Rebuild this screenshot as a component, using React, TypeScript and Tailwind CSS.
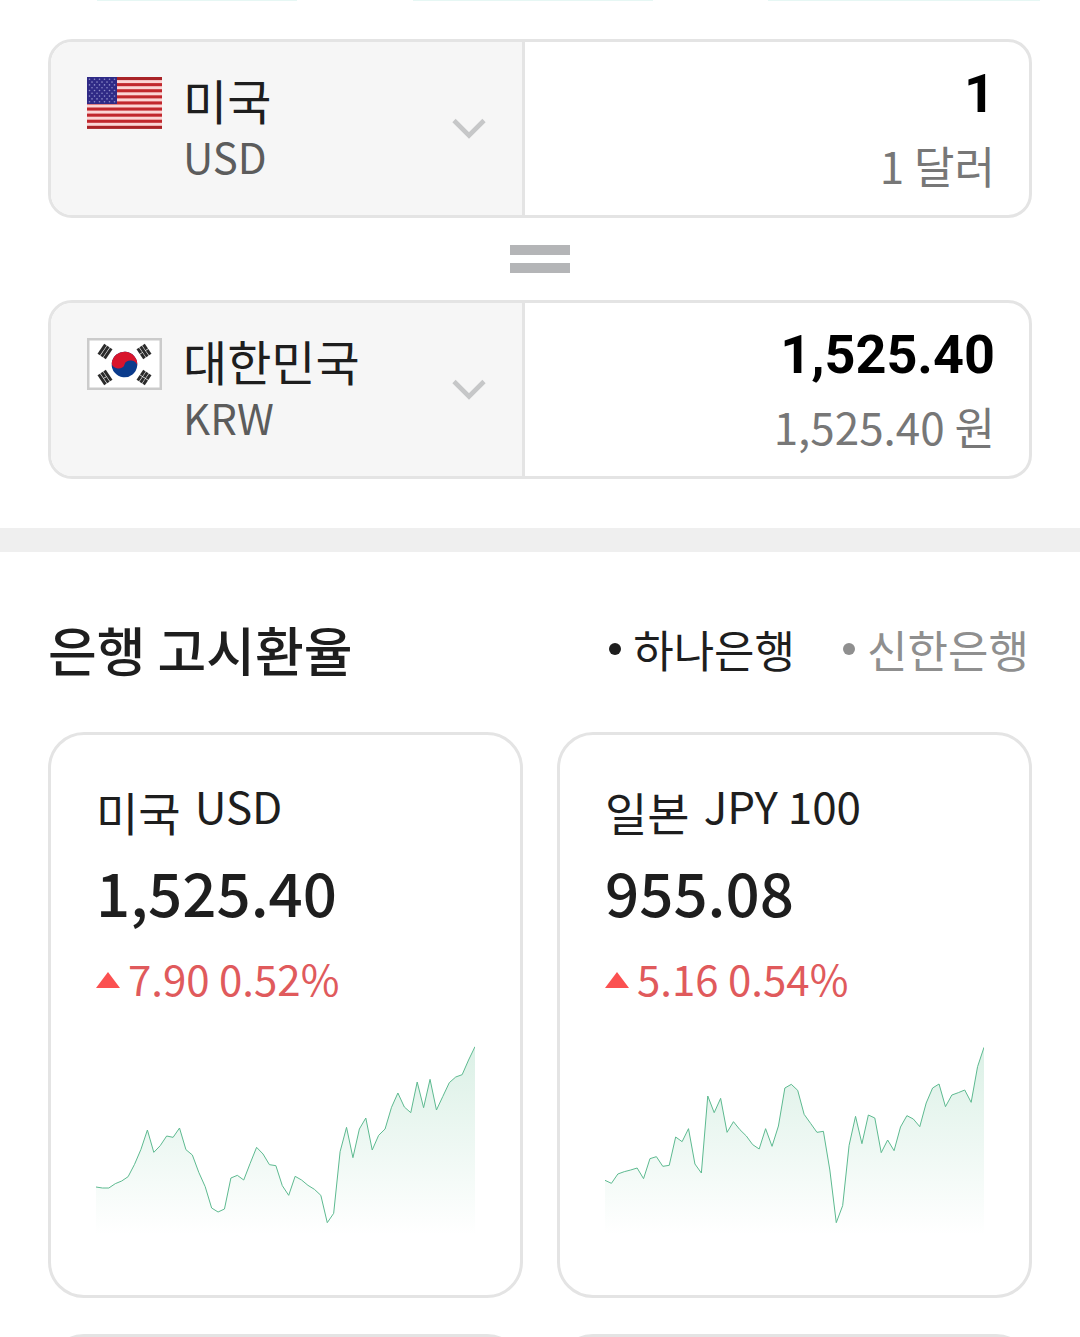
import React, { useState } from "react";

interface Currency {
  code: string;
  country: string;
  unit: string;
}

interface Rate {
  code: string;
  country: string;
  label: string;
  price: string;
  change: string;
  percent: string;
  points: number[];
}

const currencies: Currency[] = [
  { code: "USD", country: "미국", unit: "달러" },
  { code: "KRW", country: "대한민국", unit: "원" },
];

const rates: Rate[] = [
  {
    code: "usd",
    country: "미국",
    label: "USD",
    price: "1,525.40",
    change: "7.90",
    percent: "0.52%",
    points: [
      471, 474, 474, 461, 453, 440, 403, 358, 300, 367, 347, 318, 322, 294, 359,
      375, 427, 470, 534, 546, 537, 444, 436, 450, 400, 352, 372, 404, 407, 467,
      496, 439, 450, 466, 478, 496, 578, 550, 365, 292, 383, 297, 264, 360, 316,
      297, 232, 189, 231, 248, 156, 233, 148, 240, 199, 158, 141, 134, 90, 50,
    ],
  },
  {
    code: "jpy",
    country: "일본",
    label: "JPY 100",
    price: "955.08",
    change: "5.16",
    percent: "0.54%",
    points: [
      451, 460, 432, 425, 420, 414, 446, 386, 380, 409, 406, 321, 335, 296, 402,
      429, 198, 248, 205, 307, 275, 299, 318, 344, 357, 296, 349, 288, 174, 163,
      181, 253, 280, 307, 304, 420, 578, 527, 346, 259, 341, 255, 264, 368, 330,
      362, 291, 257, 267, 290, 219, 174, 162, 230, 195, 188, 180, 217, 110, 52,
    ],
  },
];

const banks = ["하나은행", "신한은행"];

const UsFlag = () => (
  <svg viewBox="0 0 75 52" className="w-[75px] h-[52px] shrink-0" aria-hidden="true">
    <rect width="75" height="52" fill="#fbd5d5" />
    {[0, 1, 2, 3, 4, 5, 6, 7, 8].map((i) => (
      <rect key={i} y={i * 6.1} width="75" height="3.1" fill={i === 0 || i === 8 ? "#a92327" : "#c1272d"} />
    ))}
    <rect width="30" height="27" fill="#2f2a86" />
    {[0, 1, 2, 3, 4, 5, 6, 7, 8].map((row) =>
      (row % 2 === 0 ? [0, 1, 2, 3, 4, 5] : [0, 1, 2, 3, 4]).map((col) => (
        <circle
          key={`${row}-${col}`}
          cx={(row % 2 === 0 ? 2.5 : 5) + col * 5}
          cy={2.3 + row * 2.8}
          r="0.8"
          fill="#8d8cc8"
        />
      ))
    )}
  </svg>
);

const Trigram = ({ x, y, angle, broken }: { x: number; y: number; angle: number; broken: boolean[] }) => (
  <g transform={`translate(${x} ${y}) rotate(${angle})`} fill="#2b2b2b">
    {broken.map((isBroken, i) =>
      isBroken ? (
        <g key={i}>
          <rect x={-5 + i * 3.5} y="-6" width="3" height="5.7" />
          <rect x={-5 + i * 3.5} y="0.3" width="3" height="5.7" />
        </g>
      ) : (
        <rect key={i} x={-5 + i * 3.5} y="-6" width="3" height="12" />
      )
    )}
  </g>
);

const KrFlag = () => (
  <svg viewBox="0 0 75 52" className="w-[75px] h-[52px] shrink-0" aria-hidden="true">
    <rect x="1.25" y="1.25" width="72.5" height="49.5" fill="#fff" stroke="#cbcbcb" strokeWidth="2.5" />
    <g transform="rotate(6 37.5 26.5)">
      <circle cx="37.5" cy="26.5" r="12.8" fill="#0b3b8c" />
      <path
        d="M24.7 26.5a12.8 12.8 0 0 1 25.6 0a6.4 4.6 0 0 0-12.8 0a6.4 4.6 0 0 1-12.8 0z"
        fill="#d8142c"
      />
    </g>
    <Trigram x={18} y={13.5} angle={34} broken={[false, false, false]} />
    <Trigram x={57} y={13.5} angle={-34} broken={[true, false, true]} />
    <Trigram x={18} y={39.5} angle={-34} broken={[false, true, false]} />
    <Trigram x={57} y={39.5} angle={34} broken={[true, true, true]} />
  </svg>
);

interface CurrencyPanelProps {
  id: string;
  code: string;
  value: string;
  onCodeChange: (code: string) => void;
  onValueChange: (value: string) => void;
}

const CurrencyPanel: React.FC<CurrencyPanelProps> = ({ id, code, value, onCodeChange, onValueChange }) => {
  const currency = currencies.find((item) => item.code === code) ?? currencies[0];

  return (
    <div className="flex h-[179px] border-3 border-[#e4e4e4] rounded-3xl overflow-hidden bg-white">
      <label
        htmlFor={`${id}-country`}
        className="flex items-start w-[474px] shrink-0 px-9 pt-[35px] bg-[#f6f6f6] border-r-3 border-[#e4e4e4]"
      >
        {code === "USD" ? <UsFlag /> : <KrFlag />}
        <span className="flex flex-col flex-1 ml-[21px] -mt-2">
          <select
            id={`${id}-country`}
            value={code}
            onChange={(e) => onCodeChange(e.target.value)}
            className="appearance-none w-full h-[60px] text-[48px] leading-[60px] text-[#1e1e1e] bg-transparent outline-none"
          >
            {currencies.map((item) => (
              <option key={item.code} value={item.code}>
                {item.country}
              </option>
            ))}
          </select>
          <span className="text-[42px] leading-[54px] text-[#5c5c5c]">{code}</span>
        </span>
        <svg viewBox="0 0 34 22" className="w-[34px] h-[22px] mt-[41px] shrink-0" fill="none" aria-hidden="true">
          <path d="M2 2.5L17 17.5L32 2.5" stroke="#c6c7c8" strokeWidth="4.6" />
        </svg>
      </label>
      <div className="flex flex-col flex-1 min-w-0 pl-9 pr-[34px] pt-5 text-right">
        <input
          type="text"
          aria-label={`${currency.country} 금액`}
          value={value}
          onChange={(e) => onValueChange(e.target.value)}
          className="w-full h-16 font-[Roboto] font-bold text-[54px] leading-16 text-right text-black bg-transparent outline-none"
        />
        <span className="mt-2 text-[44px] leading-[62px] text-[#777]">
          {value} {currency.unit}
        </span>
      </div>
    </div>
  );
};

const RateChart = ({ id, points }: { id: string; points: number[] }) => {
  const step = 1137 / (points.length - 1);
  const line = points.map((y, i) => `${(i * step).toFixed(1)},${y}`).join(" ");

  return (
    <svg viewBox="0 45 1137 570" className="block w-full mt-[37px]" aria-hidden="true">
      <defs>
        <linearGradient id={`fill-${id}`} x1="0" y1="45" x2="0" y2="615" gradientUnits="userSpaceOnUse">
          <stop offset="0" stopColor="#1fa363" stopOpacity="0.16" />
          <stop offset="1" stopColor="#1fa363" stopOpacity="0" />
        </linearGradient>
      </defs>
      <polygon points={`0,615 ${line} 1137,615`} fill={`url(#fill-${id})`} />
      <polyline points={line} fill="none" stroke="#5dba90" strokeWidth="3" />
    </svg>
  );
};

const RateCard = ({ rate }: { rate: Rate }) => (
  <a
    href={`#${rate.code}`}
    className="block h-[566px] px-[45px] pt-10 border-3 border-[#e4e4e4] rounded-[36px] bg-white text-[#1e1e1e]"
  >
    <h3 className="flex gap-[14px] leading-[60px]">
      <span className="text-[46px] pt-1.5">{rate.country}</span>
      <span className="text-[44px]">{rate.label}</span>
    </h3>
    <p className="mt-2 text-[60px] leading-[84px] font-medium">{rate.price}</p>
    <p className="flex items-center gap-2 mt-[15px] text-[42px] leading-[60px] text-[#e05a5c]">
      <svg viewBox="0 0 24 16" className="w-6 h-4 mt-1" role="img" aria-label="상승">
        <path d="M0 16L12 0L24 16z" fill="#fb5050" />
      </svg>
      <span>
        {rate.change} {rate.percent}
      </span>
    </p>
    <RateChart id={rate.code} points={rate.points} />
  </a>
);

const App: React.FC = () => {
  const [from, setFrom] = useState<string>("USD");
  const [to, setTo] = useState<string>("KRW");
  const [amount, setAmount] = useState<string>("1");
  const [result, setResult] = useState<string>("1,525.40");
  const [bank, setBank] = useState<string>(banks[0]);

  return (
    <main className="h-screen overflow-hidden bg-white font-['Noto_Sans_CJK_KR',sans-serif]">
      {/* Bottom edge of the filter chips above the calculator */}
      <div className="flex h-px pl-[97px] pr-10">
        <div className="w-[200px] bg-[#e6f7f4]"></div>
        <div className="w-60 ml-29 bg-[#e6f7f4]"></div>
        <div className="flex-1 ml-[115px] bg-[#e6f7f4]"></div>
      </div>

      <section className="px-12 pt-[38px] pb-[49px]">
        <CurrencyPanel id="from" code={from} value={amount} onCodeChange={setFrom} onValueChange={setAmount} />
        <div className="flex flex-col items-center justify-center gap-2 h-[82px]">
          <div className="w-15 h-[10px] bg-[#b4b5b7]"></div>
          <div className="w-15 h-[10px] bg-[#b4b5b7]"></div>
        </div>
        <CurrencyPanel id="to" code={to} value={result} onCodeChange={setTo} onValueChange={setResult} />
      </section>

      <div className="h-6 bg-[#efefef]"></div>

      <section className="px-12 pt-[62px]">
        <div className="flex items-center justify-between h-[70px] pr-[3px]">
          <h2 className="text-[53px] leading-[70px] font-medium text-[#1e1e1e]">은행 고시환율</h2>
          <div className="flex gap-12">
            {banks.map((name) => (
              <button
                key={name}
                type="button"
                onClick={() => setBank(name)}
                className={`flex items-center gap-3 text-[44px] leading-[70px] ${
                  bank === name ? "text-[#1e1e1e]" : "text-[#8f8f8f]"
                }`}
              >
                <span className="w-3 h-3 rounded-full bg-current"></span>
                {name}
              </button>
            ))}
          </div>
        </div>

        <div className="grid grid-cols-2 gap-x-[34px] gap-y-9 mt-12">
          {rates.map((rate) => (
            <RateCard key={rate.code} rate={rate} />
          ))}
          <div className="h-[566px] border-3 border-[#e4e4e4] rounded-[36px]"></div>
          <div className="h-[566px] border-3 border-[#e4e4e4] rounded-[36px]"></div>
        </div>
      </section>
    </main>
  );
};

export default App;
